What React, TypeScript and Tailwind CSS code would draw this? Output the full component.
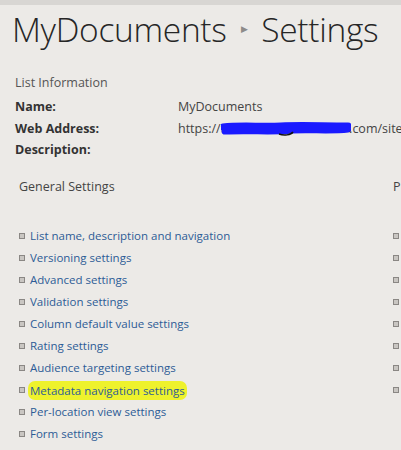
const links = [
  "List name, description and navigation",
  "Versioning settings",
  "Advanced settings",
  "Validation settings",
  "Column default value settings",
  "Rating settings",
  "Audience targeting settings",
  "Metadata navigation settings",
  "Per-location view settings",
  "Form settings",
];

const Bullet = () => (
  <span className="inline-block h-[6px] w-[6px] shrink-0 border border-[#8a8784] bg-[#c9c6c2]" />
);

const Scribble = () => (
  <svg width="130" height="16" viewBox="0 0 130 16" className="inline-block align-middle -ml-[4px] -mr-[2px]">
    <path
      d="M2 6 C20 4 40 6 60 5 C80 4 100 5 127 5 M4 10 C30 9 55 11 70 9 C90 8 110 10 127 8"
      stroke="#1a1aff"
      strokeWidth="7"
      fill="none"
      strokeLinecap="round"
    />
    <path d="M58 13 C63 15 70 14 72 11" stroke="#111" strokeWidth="1.5" fill="none" />
  </svg>
);

export default function App() {
  return (
    <div className="h-[450px] w-[401px] overflow-hidden bg-[#eceae7] font-['Open_Sans',sans-serif] text-[#333]">
      <div className="h-[5px] bg-[#d8d6d3]" />

      {/* Breadcrumb title */}
      <div className="flex items-center pl-[12px] pt-[4px] font-light text-[33.5px] leading-[40px] tracking-[-0.3px] text-[#262626]">
        <span>MyDocuments</span>
        <span className="mx-[14px] text-[9px] text-[#8d8b89]">▶</span>
        <span>Settings</span>
      </div>

      {/* List information */}
      <div className="mt-[25px] pl-[15px] text-[12.5px]">
        <div className="leading-[18px] text-[#555]">List Information</div>
        <div className="mt-[5px] grid grid-cols-[163px_1fr] gap-y-[2.5px] leading-[19px]">
          <div className="font-bold text-[#333]">Name:</div>
          <div className="text-[#444]">MyDocuments</div>
          <div className="font-bold text-[#333]">Web Address:</div>
          <div className="whitespace-nowrap text-[#444]">
            https://t<Scribble />.com/sites
          </div>
          <div className="font-bold text-[#333]">Description:</div>
          <div />
        </div>
      </div>

      {/* Settings columns */}
      <div className="mt-[19px] flex justify-between pl-[19px] text-[12.5px]">
        <div>
          <div className="leading-[18px] text-[#444]">General Settings</div>
          <ul className="mt-[29px] flex flex-col text-[11.5px]">
            {links.map((l) => (
              <li key={l} className="flex h-[22px] items-center gap-[5px]">
                <Bullet />
                <span
                  className={
                    l === "Metadata navigation settings"
                      ? "-ml-[2px] rounded-[7px] bg-[#eef22c] px-[2px] leading-[19px] text-[#2d5c96]"
                      : "leading-[18px] text-[#2d5c96]"
                  }
                >
                  {l}
                </span>
              </li>
            ))}
          </ul>
        </div>
        <div className="w-[8px] overflow-hidden">
          <div className="leading-[18px] text-[#444]">P</div>
          <ul className="mt-[29px] flex flex-col">
            {links.slice(0, 8).map((l) => (
              <li key={l} className="flex h-[22px] items-center">
                <Bullet />
              </li>
            ))}
          </ul>
        </div>
      </div>
    </div>
  );
}
